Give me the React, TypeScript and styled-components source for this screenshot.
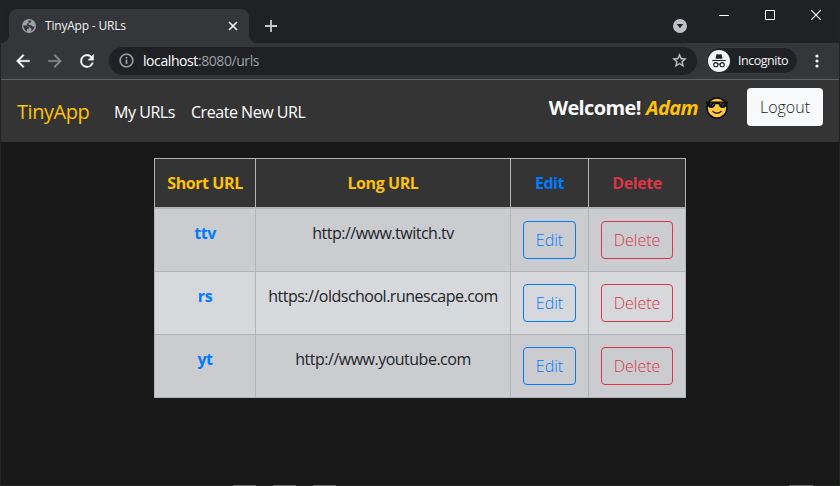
import React from "react";
import styled, { createGlobalStyle } from "styled-components";

const Global = createGlobalStyle`
  * { box-sizing: border-box; }
  html, body { margin: 0; padding: 0; overflow: hidden; background: #181818; }
  body { font-family: "Open Sans", "Noto Sans", sans-serif; }
  svg { display: block; flex: none; }
`;

const Desktop = styled.div`
  width: 840px;
  height: 486px;
  padding: 1px;
  background:
    linear-gradient(#6a6a6a, #6a6a6a) 233px 485px / 23px 1px no-repeat,
    linear-gradient(#6a6a6a, #6a6a6a) 273px 485px / 23px 1px no-repeat,
    linear-gradient(#6a6a6a, #6a6a6a) 313px 485px / 23px 1px no-repeat,
    linear-gradient(#6a6a6a, #6a6a6a) 789px 485px / 24px 1px no-repeat,
    #222422;
`;

const Window = styled.div`
  display: flex;
  flex-direction: column;
  width: 838px;
  height: 484px;
  background: #181818;
`;

const TabStrip = styled.div`
  display: flex;
  align-items: flex-start;
  height: 42px;
  background: #202124;
`;

const Tab = styled.div`
  position: relative;
  display: flex;
  align-items: center;
  width: 240px;
  height: 34px;
  margin: 8px 0 0 8px;
  padding: 0 11px 0 13px;
  border-radius: 8px 8px 0 0;
  background: #35363a;
  &::before, &::after {
    content: "";
    position: absolute;
    bottom: 0;
    width: 8px;
    height: 8px;
  }
  &::before { left: -8px; background: radial-gradient(circle at 0 0, #202124 7.5px, #35363a 8.5px); }
  &::after { right: -8px; background: radial-gradient(circle at 100% 0, #202124 7.5px, #35363a 8.5px); }
`;

const TabTitle = styled.span`
  flex: 1;
  margin-left: 9px;
  font-size: 12px;
  line-height: 16px;
  letter-spacing: -0.2px;
  color: #f1f3f4;
  white-space: nowrap;
`;

const NewTab = styled.div`
  margin: 19px 0 0 16px;
`;

const TabSearch = styled.div`
  margin: 18px 0 0 auto;
`;

const WindowControls = styled.div`
  display: flex;
  gap: 36px;
  margin: 9px 18px 0 32px;
`;

const Toolbar = styled.div`
  display: flex;
  align-items: center;
  height: 37px;
  padding: 0 0 1px 12px;
  background: #35363a;
  border-bottom: 1px solid #5f6163;
`;

const NavIcons = styled.div`
  display: flex;
  gap: 12px;
`;

const AddressBar = styled.div`
  display: flex;
  align-items: center;
  width: 588px;
  height: 28px;
  margin-left: 12px;
  padding: 0 9px 0 9px;
  border-radius: 14px;
  background: #202124;
`;

const Address = styled.span`
  flex: 1;
  margin-left: 8px;
  font-size: 14px;
  line-height: 20px;
  letter-spacing: -0.42px;
  color: #9aa0a6;
  b { font-weight: 400; color: #fff; }
`;

const IncognitoChip = styled.div`
  display: flex;
  align-items: center;
  width: 92px;
  height: 27px;
  margin-left: 9px;
  padding-left: 1px;
  border: 1px solid #3c3d41;
  border-radius: 14px;
  background: #202124;
`;

const IncognitoLabel = styled.span`
  margin-left: 8px;
  font-size: 12.5px;
  letter-spacing: -0.48px;
  color: #f1f3f4;
`;

const MenuDots = styled.div`
  margin-left: 17px;
`;

const Navbar = styled.nav`
  display: flex;
  height: 62px;
  padding: 8px 16px 0 16px;
  background: #343434;
`;

const Brand = styled.a`
  width: 97px;
  padding-top: 9px;
  font-size: 20px;
  line-height: 30px;
  letter-spacing: -0.45px;
  color: #ffc107;
`;

const NavLink = styled.a<{ $width: number }>`
  width: ${(p) => p.$width}px;
  padding-top: 12px;
  font-size: 16px;
  line-height: 24px;
  letter-spacing: -0.46px;
  color: #fff;
  white-space: nowrap;
`;

const Welcome = styled.div`
  display: flex;
  margin-left: auto;
  padding-top: 5px;
  font-size: 20px;
  font-weight: 700;
  line-height: 30px;
  letter-spacing: -0.6px;
  color: #f8f9fa;
  white-space: nowrap;
  em { margin-left: 5px; color: #ffc107; }
  svg { margin: 3px 0 0 7px; }
`;

const LogoutButton = styled.button`
  width: 76px;
  height: 38px;
  margin-left: 18px;
  padding: 0;
  border: 0;
  border-radius: 4px;
  background: #f8f9fa;
  color: #212529;
  font: 300 16px/24px "Open Sans", sans-serif;
  letter-spacing: 0;
`;

const Content = styled.main`
  flex: 1;
  display: flex;
  justify-content: center;
  align-items: flex-start;
  padding-top: 16px;
`;

const Table = styled.div`
  width: 532px;
  border: 1px solid #b3b4ba;
`;

const Row = styled.div<{ $tone: "head" | "dark" | "light" }>`
  display: grid;
  grid-template-columns: 101px 255px 78px 96px;
  height: ${(p) => (p.$tone === "head" ? 50 : 63)}px;
  border-bottom: ${(p) => (p.$tone === "head" ? 2 : 1)}px solid #b3b4ba;
  background: ${(p) => ({ head: "#343434", dark: "#cbccd0", light: "#d6d8db" })[p.$tone]};
  &:last-child { height: 62px; border-bottom: 0; }
`;

const Cell = styled.div<{ $color?: string; $bold?: boolean }>`
  padding-top: 12px;
  border-right: 1px solid #b3b4ba;
  text-align: center;
  font-size: 16px;
  line-height: 24px;
  font-weight: ${(p) => (p.$bold ? 700 : 400)};
  letter-spacing: ${(p) => (p.$bold ? -0.42 : -0.5)}px;
  color: ${(p) => p.$color ?? "#212529"};
  white-space: nowrap;
  &:last-child { border-right: 0; }
`;

const OutlineButton = styled.button<{ $color: string; $width: number }>`
  display: block;
  width: ${(p) => p.$width}px;
  height: 38px;
  margin: 0 auto;
  padding: 0;
  border: 1px solid ${(p) => p.$color};
  border-radius: 4px;
  background: transparent;
  color: ${(p) => p.$color};
  font: 300 16px/24px "Open Sans", sans-serif;
  letter-spacing: 0;
`;

const BLUE = "#007bff";
const RED = "#dc3545";
const YELLOW = "#ffc107";

const GlobeIcon = () => (
  <svg width="14" height="14" viewBox="0 0 14 14">
    <circle cx="7" cy="7" r="7" fill="#9aa0a6" />
    <path d="M1.4 6.2 4.8 6.4 7 8.3v1.3l-2 .6v2.3C2.8 11.5 1.2 9 1.4 6.2ZM6 1.4l3.4.4-.6 1.8-2 .4-.2 1.7 2.6.5 1.2 1.4h2.1C12.3 9.7 10.7 11.6 8.7 12.4l1-2.2-1.6-1.8-3.3-2.2.4-1.8L7 3.2Z" fill="#35363a" />
  </svg>
);

const CloseIcon = () => (
  <svg width="10" height="10" viewBox="0 0 10 10" stroke="#f1f3f4" strokeWidth="1.7">
    <path d="M1 1l8 8M9 1L1 9" />
  </svg>
);

const PlusIcon = () => (
  <svg width="12" height="12" viewBox="0 0 12 12" stroke="#c8cacd" strokeWidth="1.8">
    <path d="M6 0v12M0 6h12" />
  </svg>
);

const TabSearchIcon = () => (
  <svg width="14" height="14" viewBox="0 0 14 14">
    <circle cx="7" cy="7" r="7" fill="#bdc1c6" />
    <path d="M3.8 5h6.4L7 9.2Z" fill="#202124" />
  </svg>
);

const MaterialIcon = ({ d, color, size = 20 }: { d: string; color: string; size?: number }) => (
  <svg width={size} height={size} viewBox="0 0 24 24" fill={color} stroke={color} strokeWidth=".35">
    <path d={d} />
  </svg>
);

const BACK = "M20 11H7.83l5.59-5.59L12 4l-8 8 8 8 1.41-1.41L7.83 13H20v-2z";
const FORWARD = "M12 4l-1.41 1.41L16.17 11H4v2h12.17l-5.58 5.59L12 20l8-8z";
const RELOAD =
  "M17.65 6.35A7.958 7.958 0 0 0 12 4a8 8 0 1 0 7.73 10h-2.08A6 6 0 1 1 12 6c1.66 0 3.14.69 4.22 1.78L13 11h7V4l-2.35 2.35z";
const INFO = "M11 7h2v2h-2zm0 4h2v6h-2zm1-9a10 10 0 1 0 0 20 10 10 0 0 0 0-20zm0 18a8 8 0 1 1 0-16 8 8 0 0 1 0 16z";
const STAR =
  "M22 9.24l-7.19-.62L12 2 9.19 8.63 2 9.24l5.46 4.73L5.82 21 12 17.27 18.18 21l-1.63-7.03L22 9.24zM12 15.4l-3.76 2.27 1-4.28-3.32-2.88 4.38-.38L12 6.1l1.71 4.04 4.38.38-3.32 2.88 1 4.28L12 15.4z";

const IncognitoIcon = () => (
  <svg width="22" height="22" viewBox="0 0 22 22">
    <circle cx="11" cy="11" r="11" fill="#f1f3f4" />
    <path d="M7.5 8.8 8.5 4.6c.1-.5.5-.6.9-.4l1.6.4 1.6-.4c.4-.2.8-.1.9.4l1 4.2Z" fill="#202124" />
    <path d="M4.2 10.5h13.6" stroke="#202124" strokeWidth="1.1" />
    <g fill="none" stroke="#202124" strokeWidth="1.1">
      <circle cx="7.8" cy="14.7" r="2.1" />
      <circle cx="14.2" cy="14.7" r="2.1" />
      <path d="M9.9 14.4q1.1-.7 2.2 0" />
    </g>
  </svg>
);

const SunglassesFace = () => (
  <svg width="24" height="24" viewBox="0 0 24 24">
    <circle cx="12" cy="12" r="10" fill="#ffc83d" stroke="#111" strokeWidth="1.6" />
    <path d="M1 5.6h22v2l-1.4.5c-.3 2.9-1.5 4-3.9 4-2.5 0-3.5-1.3-4-3.8h-3.4c-.5 2.5-1.5 3.8-4 3.8-2.4 0-3.6-1.1-3.9-4L1 7.6Z" fill="#111" />
    <path d="M5 8.4 6.6 7M7.2 9.8l2-2.2M14.8 8.4 16.4 7M17 9.8l2-2.2" stroke="#777" strokeWidth=".9" />
    <path d="M8 15.4q4 3.4 8 0" fill="none" stroke="#111" strokeWidth="1.3" strokeLinecap="round" />
  </svg>
);

const urls = [
  { id: "ttv", url: "http://www.twitch.tv" },
  { id: "rs", url: "https://oldschool.runescape.com" },
  { id: "yt", url: "http://www.youtube.com" },
];

export default function App() {
  return (
    <Desktop>
      <Global />
      <Window>
        <TabStrip>
          <Tab>
            <GlobeIcon />
            <TabTitle>TinyApp - URLs</TabTitle>
            <CloseIcon />
          </Tab>
          <NewTab><PlusIcon /></NewTab>
          <TabSearch><TabSearchIcon /></TabSearch>
          <WindowControls>
            <svg width="10" height="10" viewBox="0 0 10 10" stroke="#fff"><path d="M0 5.5h10" /></svg>
            <svg width="10" height="10" viewBox="0 0 10 10" stroke="#fff" fill="none"><path d="M.5.5h9v9h-9Z" /></svg>
            <svg width="10" height="10" viewBox="0 0 10 10" stroke="#fff" strokeWidth="1.2"><path d="M0 0l10 10M10 0L0 10" /></svg>
          </WindowControls>
        </TabStrip>
        <Toolbar>
          <NavIcons>
            <MaterialIcon d={BACK} color="#fff" />
            <MaterialIcon d={FORWARD} color="#86888a" />
            <MaterialIcon d={RELOAD} color="#fff" />
          </NavIcons>
          <AddressBar>
            <MaterialIcon d={INFO} color="#9aa0a6" size={17} />
            <Address><b>localhost</b>:8080/urls</Address>
            <MaterialIcon d={STAR} color="#c3c5c8" size={17} />
          </AddressBar>
          <IncognitoChip>
            <IncognitoIcon />
            <IncognitoLabel>Incognito</IncognitoLabel>
          </IncognitoChip>
          <MenuDots>
            <svg width="4" height="14" viewBox="0 0 4 14" fill="#f1f3f4">
              <circle cx="2" cy="2" r="1.6" /><circle cx="2" cy="7" r="1.6" /><circle cx="2" cy="12" r="1.6" />
            </svg>
          </MenuDots>
        </Toolbar>
        <Navbar>
          <Brand>TinyApp</Brand>
          <NavLink $width={77}>My URLs</NavLink>
          <NavLink $width={120}>Create New URL</NavLink>
          <Welcome>
            <span>Welcome!</span>
            <em>Adam</em>
            <SunglassesFace />
          </Welcome>
          <LogoutButton>Logout</LogoutButton>
        </Navbar>
        <Content>
          <Table>
            <Row $tone="head">
              <Cell $bold $color={YELLOW}>Short URL</Cell>
              <Cell $bold $color={YELLOW}>Long URL</Cell>
              <Cell $bold $color={BLUE}>Edit</Cell>
              <Cell $bold $color={RED}>Delete</Cell>
            </Row>
            {urls.map((u, i) => (
              <Row key={u.id} $tone={i % 2 ? "light" : "dark"}>
                <Cell $bold $color={BLUE}>{u.id}</Cell>
                <Cell>{u.url}</Cell>
                <Cell><OutlineButton $color={BLUE} $width={53}>Edit</OutlineButton></Cell>
                <Cell><OutlineButton $color={RED} $width={72}>Delete</OutlineButton></Cell>
              </Row>
            ))}
          </Table>
        </Content>
      </Window>
    </Desktop>
  );
}
